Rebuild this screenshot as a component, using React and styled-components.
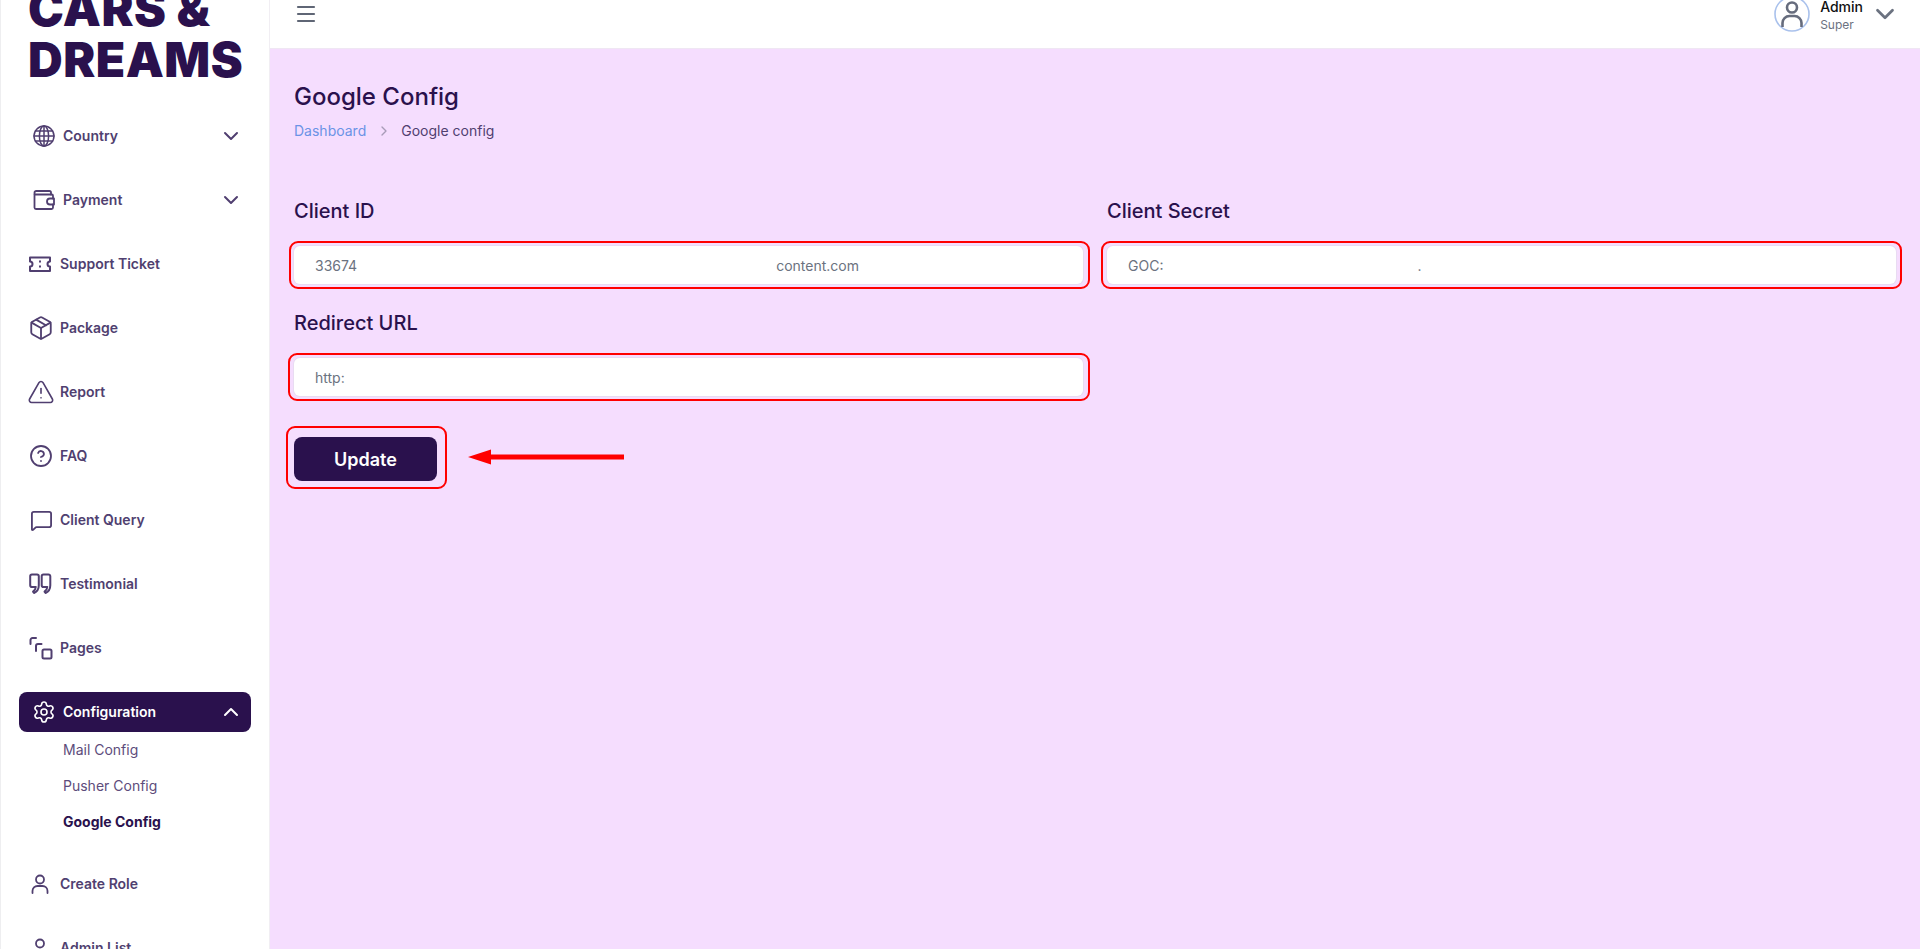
import styled, { createGlobalStyle } from "styled-components";
import {
  ChevronDown,
  ChevronUp,
  ChevronRight,
  Package,
  TriangleAlert,
  CircleHelp,
  MessageSquare,
  Settings,
  Menu,
} from "lucide-react";

const GlobalStyle = createGlobalStyle`
  * { box-sizing: border-box; }
  html, body { margin: 0; height: 100%; overflow: hidden; }
  body { font-family: "Inter", "Liberation Sans", sans-serif; background: #f5ddfe; }
`;

const Shell = styled.div`
  display: flex;
  height: 949px;
  overflow: hidden;
`;

const Sidebar = styled.aside`
  width: 270px;
  flex-shrink: 0;
  background: #fff;
  border-left: 1px solid #eeeef0;
  border-right: 1px solid #f1eef3;
  overflow: hidden;
`;

const Logo = styled.div`
  margin: -17px 0 0 27px;
  height: 121px;
  font-size: 48px;
  line-height: 51px;
  font-weight: 900;
  letter-spacing: 0.5px;
  color: #2a114d;
`;

const Nav = styled.nav`
  display: flex;
  flex-direction: column;
  gap: 24px;
  padding-top: 12px;
`;

const NavItem = styled.div`
  display: flex;
  align-items: center;
  height: 40px;
  margin: 0 18px;
  padding: 0 8px 0 ${(p) => (p.$plain ? "10px" : "13px")};
  gap: 7px;
  border-radius: 8px;
  font-size: 14px;
  font-weight: 600;
  color: ${(p) => (p.$active ? "#fff" : "#503f70")};
  background: ${(p) => (p.$active ? "#2a114d" : "transparent")};

  svg { flex-shrink: 0; }
`;

const IconSlot = styled.span`
  display: flex;
  align-items: center;
  justify-content: center;
  width: 24px;
  height: 24px;
  flex-shrink: 0;
`;

const NavLabel = styled.span`
  flex: 1;
  margin-bottom: 2px;
`;

const SubList = styled.div`
  display: flex;
  flex-direction: column;
  padding-left: 62px;
`;

const SubItem = styled.div`
  height: 36px;
  line-height: 36px;
  font-size: 14px;
  font-weight: ${(p) => (p.$current ? 700 : 400)};
  color: ${(p) => (p.$current ? "#2a114d" : "#5d4c7b")};
`;

const Main = styled.main`
  flex: 1;
  min-width: 0;
`;

const TopBar = styled.header`
  display: flex;
  align-items: center;
  justify-content: space-between;
  height: 49px;
  padding: 0 20px 21px 24px;
  background: #fff;
  border-bottom: 1px solid #efe7f3;
`;

const Profile = styled.div`
  display: flex;
  align-items: center;
`;

const ProfileText = styled.div`
  display: flex;
  flex-direction: column;
  margin: 4px 7px 0 10px;
`;

const ProfileName = styled.span`
  font-size: 14px;
  line-height: 18px;
  font-weight: 500;
  color: #111;
`;

const ProfileRole = styled.span`
  font-size: 12px;
  line-height: 18px;
  color: #6b7280;
`;

const Content = styled.section`
  padding: 33px 18px 0 24px;
`;

const Title = styled.h1`
  margin: 0;
  font-size: 24px;
  line-height: 30px;
  font-weight: 500;
  color: #2a114d;
`;

const Breadcrumb = styled.div`
  display: flex;
  align-items: center;
  gap: 9.5px;
  margin-top: 9px;
  font-size: 14px;
  line-height: 20px;
  color: #503f70;
`;

const Crumb = styled.span`
  color: #6b93e6;
`;

const FormGrid = styled.div`
  display: grid;
  grid-template-columns: 789px 789px;
  column-gap: 24px;
  row-gap: 25px;
  margin-top: 56px;
`;

const Field = styled.div`
  display: flex;
  flex-direction: column;
  gap: 21px;
`;

const Label = styled.label`
  font-size: 20px;
  line-height: 28px;
  font-weight: 500;
  color: #2a114d;
`;

const Highlight = styled.div`
  position: relative;

  &::after {
    content: "";
    position: absolute;
    inset: ${(p) => p.$inset || "-5px -6px"};
    border: 2px solid #ff0000;
    border-radius: 9px;
    pointer-events: none;
  }
`;

const Input = styled.div`
  display: flex;
  align-items: center;
  height: 38px;
  padding: 0 21px;
  background: #fff;
  border-radius: 6px;
  box-shadow: 0 0 0 1px #e9dcf2;
  font-size: 14px;
  color: #6b7280;
`;

const Hidden = styled.span`
  width: ${(p) => p.$w}px;
  flex-shrink: 0;
`;

const Actions = styled.div`
  display: flex;
  align-items: center;
  gap: 30px;
  margin-top: 41px;
`;

const UpdateButton = styled.button`
  display: block;
  width: 143px;
  height: 44px;
  border: 0;
  border-radius: 8px;
  background: #2a114d;
  color: #fff;
  font-family: inherit;
  font-size: 18px;
  font-weight: 600;
`;

const ArrowWrap = styled.div`
  display: flex;
  margin-bottom: 5px;
`;

const Icon = ({ children, sw = 1.8 }) => (
  <svg
    width="24"
    height="24"
    viewBox="0 0 24 24"
    fill="none"
    stroke="currentColor"
    strokeWidth={sw}
    strokeLinecap="round"
    strokeLinejoin="round"
  >
    {children}
  </svg>
);

const GlobeIcon = () => (
  <Icon sw={1.5}>
    <circle cx="12" cy="12" r="10" />
    <ellipse cx="12" cy="12" rx="4.6" ry="10" />
    <path d="M12 2v20M2 12h20M3.4 7h17.2M3.4 17h17.2" />
  </Icon>
);

const WalletIcon = () => (
  <Icon>
    <path d="M19 6.5V4.6A1.6 1.6 0 0 0 17.4 3H4.2A1.7 1.7 0 0 0 2.5 4.7v14.8c0 .8.7 1.5 1.5 1.5h15.5c.8 0 1.5-.7 1.5-1.5v-3" />
    <path d="M2.7 6.5h17c.7 0 1.3.6 1.3 1.3v2.7" />
    <path d="M22 10.5h-4a3 3 0 0 0 0 6h4z" />
  </Icon>
);

const TicketIcon = () => (
  <Icon sw={2}>
    <path d="M1 5.5h20v4a2.5 2.5 0 0 0 0 5v4.5H1v-4.5a2.5 2.5 0 0 0 0-5z" />
    <path d="M11 9.2v.6M11 14.2v.6" />
  </Icon>
);

const QuoteIcon = () => (
  <Icon sw={2}>
    <path d="M3 2.5h5a1.8 1.8 0 0 1 1.8 1.8v9c0 3.6-1.8 6.4-4.8 7.7l-1-1.3c1.6-1 2.6-2.7 2.8-4.7H3a1.8 1.8 0 0 1-1.8-1.8V4.3A1.8 1.8 0 0 1 3 2.5z" />
    <path d="M14.5 2.5h5a1.8 1.8 0 0 1 1.8 1.8v9c0 3.6-1.8 6.4-4.8 7.7l-1-1.3c1.6-1 2.6-2.7 2.8-4.7h-3.8a1.8 1.8 0 0 1-1.8-1.8V4.3a1.8 1.8 0 0 1 1.8-1.8z" />
  </Icon>
);

const PagesIcon = () => (
  <Icon sw={2}>
    <path d="M7 2H3.5A2 2 0 0 0 1.5 4v4" />
    <path d="M12.5 8H9a2 2 0 0 0-2 2v5" />
    <rect x="13.5" y="13.5" width="9" height="9" rx="1.5" />
  </Icon>
);

const UserIcon = () => (
  <Icon>
    <circle cx="11" cy="7.5" r="4" />
    <path d="M3.5 21v-2a5 5 0 0 1 5-5h5a5 5 0 0 1 5 5v2" />
  </Icon>
);

const Avatar = () => (
  <svg width="36" height="36" viewBox="0 0 36 36" fill="none">
    <circle cx="18" cy="18" r="17" stroke="#a9c1ec" strokeWidth="1.6" />
    <circle cx="18" cy="11.5" r="5" stroke="#666c7d" strokeWidth="2.6" />
    <path d="M8.5 31v-4a7 7 0 0 1 7-7h5a7 7 0 0 1 7 7v4" stroke="#666c7d" strokeWidth="2.6" />
  </svg>
);

const RedArrow = () => (
  <svg width="158" height="20" viewBox="0 0 158 20">
    <path d="M1 10 L24 2.5 V7.5 H157 V12.5 H24 V17.5 Z" fill="#ff0000" />
  </svg>
);

const menuTop = [
  { label: "Country", icon: <GlobeIcon />, chevron: true },
  { label: "Payment", icon: <WalletIcon />, chevron: true },
  { label: "Support Ticket", icon: <TicketIcon />, plain: true },
  { label: "Package", icon: <Package size={26} strokeWidth={1.7} />, plain: true },
  { label: "Report", icon: <TriangleAlert size={28} strokeWidth={1.4} />, plain: true },
  { label: "FAQ", icon: <CircleHelp size={24} strokeWidth={1.8} />, plain: true },
  { label: "Client Query", icon: <MessageSquare size={23} strokeWidth={1.9} />, plain: true },
  { label: "Testimonial", icon: <QuoteIcon />, plain: true },
  { label: "Pages", icon: <PagesIcon />, plain: true },
];

const menuBottom = [
  { label: "Create Role", icon: <UserIcon /> },
  { label: "Admin List", icon: <UserIcon /> },
];

function App() {
  return (
    <>
      <GlobalStyle />
      <Shell>
        <Sidebar>
          <Logo>
            CARS &amp;
            <br />
            DREAMS
          </Logo>
          <Nav>
            {menuTop.map((item) => (
              <NavItem key={item.label} $plain={item.plain}>
                <IconSlot>{item.icon}</IconSlot>
                <NavLabel>{item.label}</NavLabel>
                {item.chevron && <ChevronDown size={24} strokeWidth={2} />}
              </NavItem>
            ))}
            <div>
              <NavItem $active>
                <IconSlot>
                  <Settings size={24} strokeWidth={1.6} />
                </IconSlot>
                <NavLabel>Configuration</NavLabel>
                <ChevronUp size={24} strokeWidth={2} />
              </NavItem>
              <SubList>
                <SubItem>Mail Config</SubItem>
                <SubItem>Pusher Config</SubItem>
                <SubItem $current>Google Config</SubItem>
              </SubList>
            </div>
            {menuBottom.map((item) => (
              <NavItem key={item.label} $plain>
                <IconSlot>{item.icon}</IconSlot>
                <NavLabel>{item.label}</NavLabel>
              </NavItem>
            ))}
          </Nav>
        </Sidebar>
        <Main>
          <TopBar>
            <Menu size={24} color="#5f6675" strokeWidth={2.2} />
            <Profile>
              <Avatar />
              <ProfileText>
                <ProfileName>Admin</ProfileName>
                <ProfileRole>Super</ProfileRole>
              </ProfileText>
              <ChevronDown size={30} color="#6b7280" strokeWidth={2.2} />
            </Profile>
          </TopBar>
          <Content>
            <Title>Google Config</Title>
            <Breadcrumb>
              <Crumb>Dashboard</Crumb>
              <ChevronRight size={16} color="#a79bb8" />
              <span>Google config</span>
            </Breadcrumb>
            <FormGrid>
              <Field>
                <Label>Client ID</Label>
                <Highlight $inset="-5px -7px -5px -5px">
                  <Input>
                    33674
                    <Hidden $w={419} />
                    content.com
                  </Input>
                </Highlight>
              </Field>
              <Field>
                <Label>Client Secret</Label>
                <Highlight>
                  <Input>
                    GOC:
                    <Hidden $w={254} />.
                  </Input>
                </Highlight>
              </Field>
              <Field>
                <Label>Redirect URL</Label>
                <Highlight $inset="-5px -7px -5px -6px">
                  <Input>http:</Input>
                </Highlight>
              </Field>
            </FormGrid>
            <Actions>
              <Highlight $inset="-11px -10px -8px -8px">
                <UpdateButton>Update</UpdateButton>
              </Highlight>
              <ArrowWrap>
                <RedArrow />
              </ArrowWrap>
            </Actions>
          </Content>
        </Main>
      </Shell>
    </>
  );
}

export default App;
